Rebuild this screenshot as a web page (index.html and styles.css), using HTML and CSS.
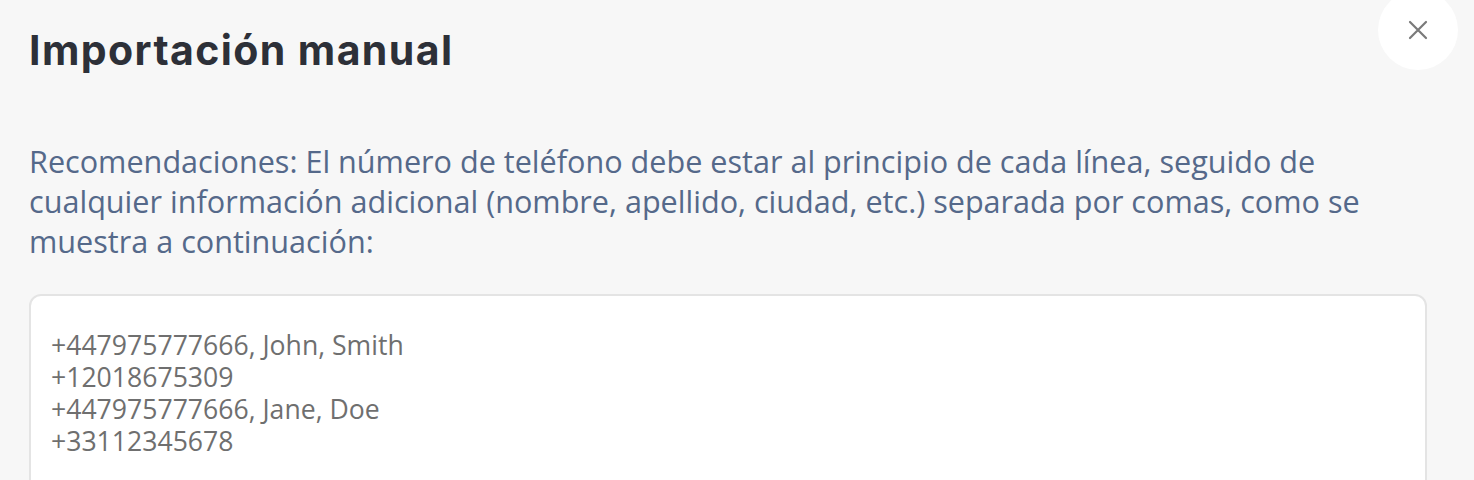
FILE: index.html
```html
<html>

<head>
    <link rel="stylesheet" href="styles.css">
    <title>Importación manual</title>
</head>

<body>
    <div class='modal'>
        <button class='close' type='button' aria-label='Cerrar'>
            <svg width='20' height='20' viewBox='0 0 20 20'>
                <path d='M2 2 L18 18 M18 2 L2 18' stroke='#7a7a7a' stroke-width='2.2' stroke-linecap='round' />
            </svg>
        </button>
        <h1>Importación manual</h1>
        <p class='hint'>Recomendaciones: El número de teléfono debe estar al principio de cada línea, seguido de cualquier información adicional (nombre, apellido, ciudad, etc.) separada por comas, como se muestra a continuación:</p>
        <textarea placeholder='+447975777666, John, Smith
+12018675309
+447975777666, Jane, Doe
+33112345678'></textarea>
    </div>
</body>

</html>
```

FILE: styles.css
```css
body {
    margin: 0;
    background-color: #f7f7f7;
    font-family: "Open Sans", sans-serif;
}

.modal {
    position: relative;
    padding: 22px 47px 0 29px;
}

h1 {
    margin: 0;
    font-family: Inter, sans-serif;
    font-weight: 700;
    font-size: 41px;
    line-height: 56px;
    letter-spacing: 1.4px;
    color: #2d3038;
}

.close {
    position: absolute;
    top: -10px;
    right: 16px;
    width: 80px;
    height: 80px;
    border: none;
    border-radius: 50%;
    background-color: #fff;
    display: flex;
    justify-content: center;
    align-items: center;
    padding: 0;
}

.hint {
    margin: 63px 0 0;
    font-size: 30.6px;
    line-height: 40px;
    color: #55698a;
}

textarea {
    display: block;
    box-sizing: border-box;
    width: 100%;
    height: 200px;
    margin-top: 33px;
    padding: 33px 20px;
    border: 2px solid #e4e4e4;
    border-radius: 12px;
    background-color: #fff;
    font-family: "Open Sans", sans-serif;
    font-size: 26.6px;
    line-height: 32px;
    resize: none;
}

textarea::placeholder {
    color: #6f6f6f;
    opacity: 1;
}
```
